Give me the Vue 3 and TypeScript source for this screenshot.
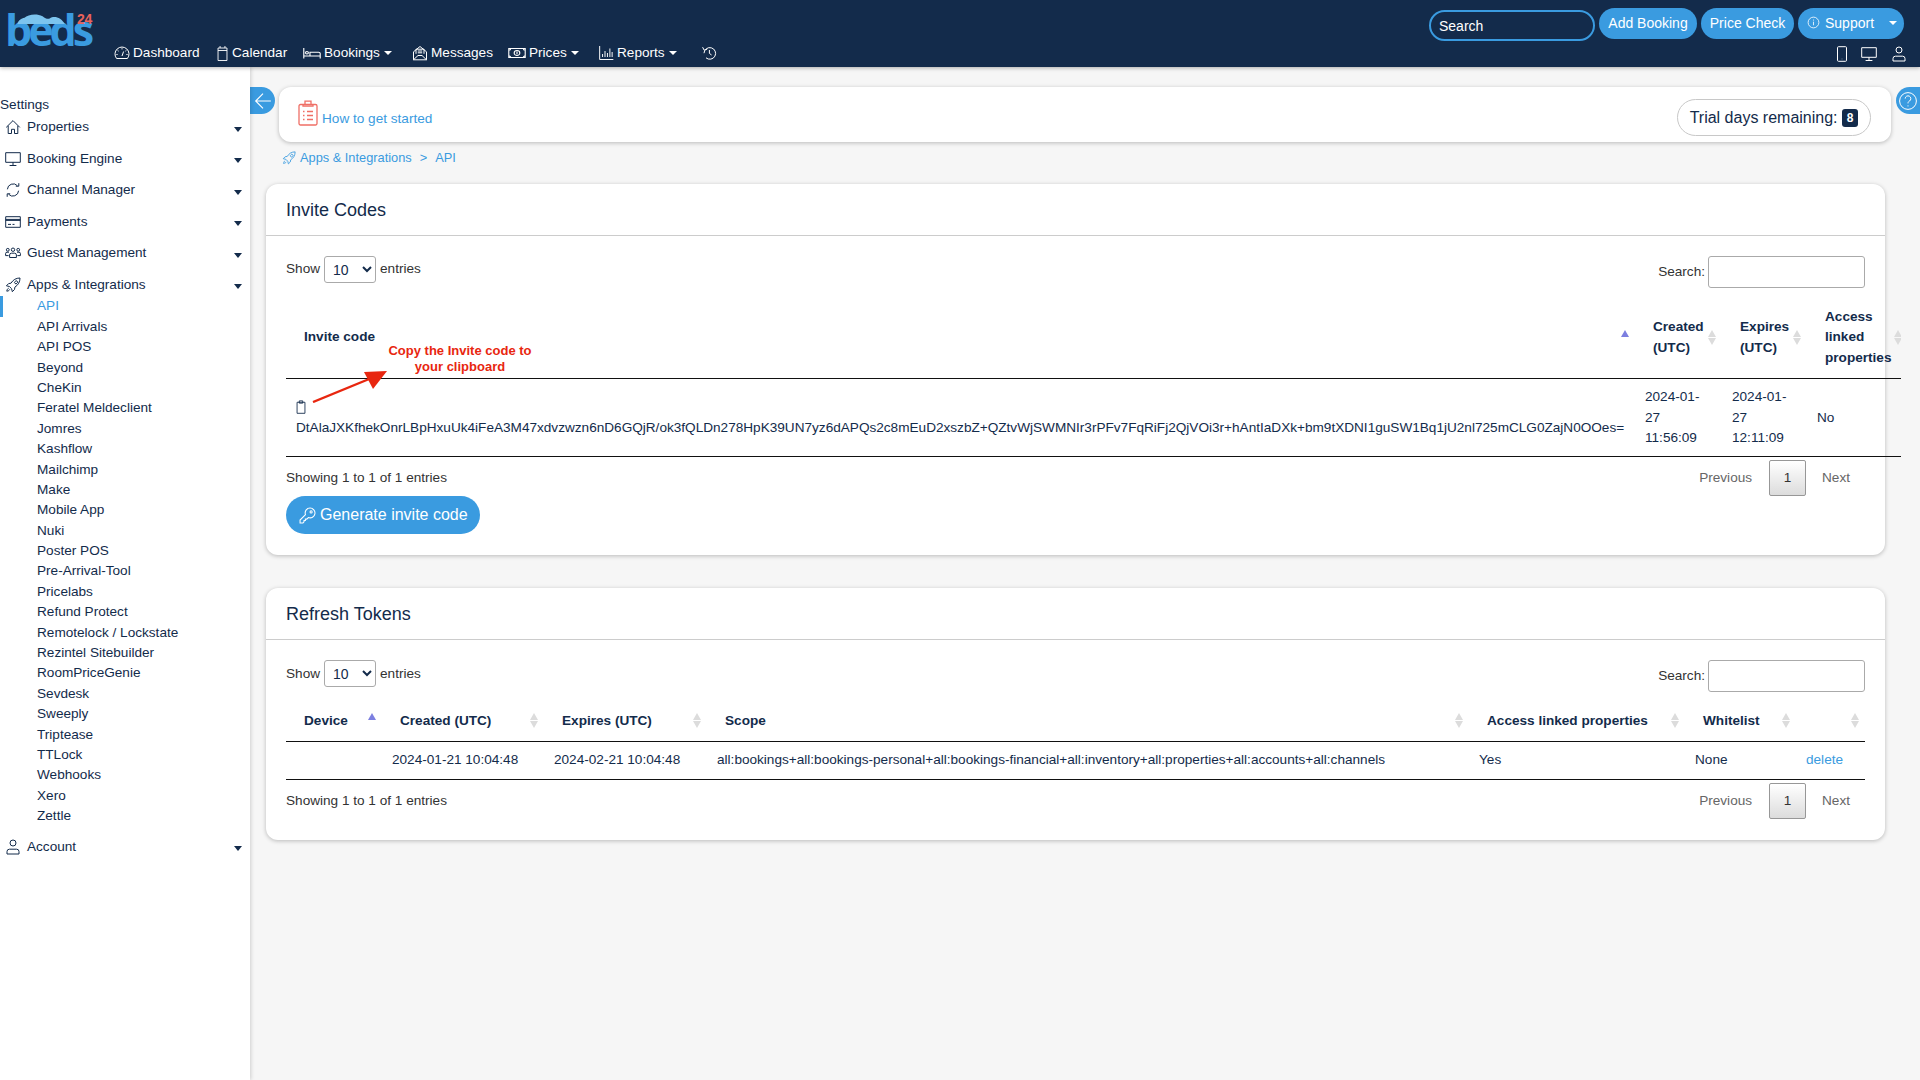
<script setup lang="ts">
const subItems: string[] = ['API','API Arrivals','API POS','Beyond','CheKin','Feratel Meldeclient','Jomres','Kashflow','Mailchimp','Make','Mobile App','Nuki','Poster POS','Pre-Arrival-Tool','Pricelabs','Refund Protect','Remotelock / Lockstate','Rezintel Sitebuilder','RoomPriceGenie','Sevdesk','Sweeply','Triptease','TTLock','Webhooks','Xero','Zettle']
const icons: Record<string,string> = {
  gauge: 'M2.6 13.5a7 7 0 1 1 10.8 0zM8 11l1.6-4.5M8 3.2v1.2M3.6 5.4l1 .7M12.4 5.4l-1 .7M2.4 9.5h1.2M12.4 9.5h1.2',
  calendar: 'M2.5 3h11v12.5h-11zM2.5 5.5h11M5 1v2M11 1v2',
  bed: 'M.7 3v10.5M.7 11h14.6M15.3 13.5V8.6a1.4 1.4 0 0 0-1.4-1.4H6.2V11M2.2 7.8a1.3 1.3 0 1 0 2.6 0a1.3 1.3 0 1 0-2.6 0',
  mail: 'M1.5 6.8v8h13v-8M1.5 6.8L8 1.5l6.5 5.3M1.5 14.8L6 10.5h4l4.5 4.3M4 8.8V4.2h8v4.6M5.8 6h4.4M5.8 7.8h4.4',
  money: 'M.7 3.5h14.6v9H.7zM8 5.5a2.5 2.5 0 1 0 0 5a2.5 2.5 0 1 0 0-5M2.4 3.5a1.7 1.7 0 0 1-1.7 1.7M13.6 3.5a1.7 1.7 0 0 0 1.7 1.7M2.4 12.5a1.7 1.7 0 0 0-1.7-1.7M13.6 12.5a1.7 1.7 0 0 1 1.7-1.7M8 6.5v3',
  chart: 'M.7 1v13.5h14.6M3.8 12V9M6.4 12V6M9 12V8M11.6 12V3.5M14 12V7',
  history: 'M3 8.2a5.8 5.8 0 1 1 2 4.6M1.6 2.2l1.6 3 3-1M8.4 5v3.4l2.2 1.6',
  phone: 'M4.5.7h7a1 1 0 0 1 1 1v12.6a1 1 0 0 1-1 1h-7a1 1 0 0 1-1-1V1.7a1 1 0 0 1 1-1zM8 12.8v.4',
  monitor: 'M.7 1.7h14.6v9.6H.7zM8 11.3v3M4.6 14.5h6.8',
  person: 'M8 1a3 3 0 1 0 0 6a3 3 0 1 0 0-6M2 15v-2.4a2.4 2.4 0 0 1 2.4-2.4h7.2a2.4 2.4 0 0 1 2.4 2.4V15z',
  home: 'M1.2 8.4L8 1.6l6.8 6.8M3.2 6.8v7.7h3.3v-4.2h3v4.2h3.3V6.8',
  sync: 'M2.4 7.3a5.8 5.8 0 0 1 10-3.6M13.8 1.2v3h-3M13.6 8.7a5.8 5.8 0 0 1-10 3.6M2.2 14.8v-3h3',
  card: 'M.7 2.7h14.6v10.6H.7zM.7 5.4h14.6M.7 6.4h14.6M3 10.4h3M7.5 10.4h2',
  people: 'M8 3a1.7 1.7 0 1 0 0 3.4A1.7 1.7 0 1 0 8 3M2.8 3.4a1.4 1.4 0 1 0 0 2.8a1.4 1.4 0 1 0 0-2.8M13.2 3.4a1.4 1.4 0 1 0 0 2.8a1.4 1.4 0 1 0 0-2.8M4.6 12.5V10a1.8 1.8 0 0 1 1.8-1.8h3.2a1.8 1.8 0 0 1 1.8 1.8v2.5zM3.6 10.6H.6V8.6a1.4 1.4 0 0 1 1.4-1.4h2M12.4 10.6h3V8.6A1.4 1.4 0 0 0 14 7.2h-2',
  rocket: 'M15 1c-4 0-7 1.8-9 5.2L3.6 6.6 1.4 8.8l3 .7 2.2 2.2.7 3 2.2-2.2.4-2.4C13.2 8 15 5 15 1zM10.2 4.4a1.3 1.3 0 1 0 1.8 1.8a1.3 1.3 0 1 0-1.8-1.8M3.6 11.2c-1 .4-1.6 1.4-1.8 3 1.6-.2 2.6-.8 3-1.8',
  key: 'M10.4 1a4.6 4.6 0 0 0-4.3 6.2L1 12.3V15h2.7l1-1v-1.3H6V11.4h1.3l1.5-1.5A4.6 4.6 0 1 0 10.4 1zM11.4 3.6a1 1 0 1 0 0 2a1 1 0 1 0 0-2',
  clip: 'M3.5 2.6h9v12.6h-9zM6 1h4v2.6H6z'
}
const navLinks = [
  { i: 'gauge', t: 'Dashboard', w: 102, iw: 16, c: false },
  { i: 'calendar', t: 'Calendar', w: 87, iw: 13, c: false },
  { i: 'bed', t: 'Bookings', w: 109, iw: 18, c: true },
  { i: 'mail', t: 'Messages', w: 96, iw: 16, c: false },
  { i: 'money', t: 'Prices', w: 91, iw: 18, c: true },
  { i: 'chart', t: 'Reports', w: 102, iw: 15, c: true }
]
const groups = [
  { i: 'home', t: 'Properties' },
  { i: 'monitor', t: 'Booking Engine' },
  { i: 'sync', t: 'Channel Manager' },
  { i: 'card', t: 'Payments' },
  { i: 'people', t: 'Guest Management' },
  { i: 'rocket', t: 'Apps & Integrations' }
]
const inviteCode = 'DtAlaJXKfhekOnrLBpHxuUk4iFeA3M47xdvzwzn6nD6GQjR/ok3fQLDn278HpK39UN7yz6dAPQs2c8mEuD2xszbZ+QZtvWjSWMNIr3rPFv7FqRiFj2QjVOi3r+hAntIaDXk+bm9tXDNI1guSW1Bq1jU2nl725mCLG0ZajN0OOes='
const scope = 'all:bookings+all:bookings-personal+all:bookings-financial+all:inventory+all:properties+all:accounts+all:channels'
const tokenCols = [
  { t: 'Device', w: 96, asc: true },
  { t: 'Created (UTC)', w: 162, asc: false },
  { t: 'Expires (UTC)', w: 163, asc: false },
  { t: 'Scope', w: 762, asc: false },
  { t: 'Access linked properties', w: 216, asc: false },
  { t: 'Whitelist', w: 111, asc: false },
  { t: '', w: 69, asc: false }
]
</script>

<template>
  <div class="page">
    <header class="nav">
      <div class="brand">
        <span class="beds">beds</span>
        <svg class="cloud" viewBox="0 0 60 14"><path d="M0 14C1 9 5 7 9 6C13 2 24 0 32 4C36 7 38 8 41 7C47 3 56 6 60 14z"/></svg>
        <span class="b24">24</span>
      </div>
      <nav class="links">
        <a v-for="l in navLinks" :key="l.t" class="link" :style="{ width: l.w + 'px' }">
          <svg class="ni" :style="{ width: l.iw + 'px' }" viewBox="0 0 16 16" preserveAspectRatio="none"><path :d="icons[l.i]"/></svg>
          <span>{{ l.t }}</span>
          <i v-if="l.c" class="caret white"></i>
        </a>
        <svg class="ni hist" viewBox="0 0 16 16"><path :d="icons.history"/></svg>
      </nav>
      <div class="right">
        <div class="tools">
          <div class="search">Search</div>
          <button class="pill">Add Booking</button>
          <button class="pill">Price Check</button>
          <button class="pill support">
            <svg class="info" viewBox="0 0 16 16"><circle cx="8" cy="8" r="6.6"/><path d="M8 7v4.4M8 4.4v1.2"/></svg>
            <span>Support</span>
            <i class="caret white small"></i>
          </button>
        </div>
        <div class="devices">
          <svg class="ni phone" viewBox="0 0 16 16"><path :d="icons.phone"/></svg>
          <svg class="ni" viewBox="0 0 16 16"><path :d="icons.monitor"/></svg>
          <svg class="ni" viewBox="0 0 16 16"><path :d="icons.person"/></svg>
        </div>
      </div>
    </header>

    <div class="shell">
      <aside class="side">
        <div class="settings">Settings</div>
        <div v-for="g in groups" :key="g.t" class="group">
          <svg class="gi" viewBox="0 0 16 16"><path :d="icons[g.i]"/></svg>
          <span>{{ g.t }}</span>
          <i class="caret navy"></i>
        </div>
        <ul class="subs">
          <li v-for="(s, n) in subItems" :key="s" :class="{ on: n === 0 }">{{ s }}</li>
        </ul>
        <div class="group account">
          <svg class="gi" viewBox="0 0 16 16"><path :d="icons.person"/></svg>
          <span>Account</span>
          <i class="caret navy"></i>
        </div>
      </aside>

      <main class="main">
        <button class="back" aria-label="Back">
          <svg viewBox="0 0 16 16"><path d="M15 8H1.5M8 1.5L1.5 8L8 14.5"/></svg>
        </button>
        <button class="help" aria-label="Help">
          <svg viewBox="0 0 20 20"><circle cx="10" cy="10" r="8.4"/><path d="M7.2 7.6a2.8 2.8 0 1 1 4.3 2.4c-1 .6-1.5 1.1-1.5 2.4M10 14.4v1"/></svg>
        </button>

        <section class="top">
          <svg class="todo" viewBox="0 0 20 26"><path d="M2.5 4.5h15a1.5 1.5 0 0 1 1.5 1.5v17.5a1.5 1.5 0 0 1-1.5 1.5h-15A1.5 1.5 0 0 1 1 23.5V6a1.5 1.5 0 0 1 1.5-1.5zM7 4.5V1.2h6v3.3M5 4.5v1.6h10V4.5M5 11.5h1.5M9 11.5h6M5 15.5h1.5M9 15.5h6M5 19.5h1.5M9 19.5h6"/></svg>
          <a class="start">How to get started</a>
          <div class="trial">Trial days remaining: <b>8</b></div>
        </section>

        <div class="crumb">
          <svg viewBox="0 0 16 16"><path :d="icons.rocket"/></svg>
          <span>Apps &amp; Integrations</span><span class="gt">&gt;</span><span>API</span>
        </div>

        <section class="card">
          <h2>Invite Codes</h2>
          <div class="body">
            <div class="controls">
              <label class="show">Show <select><option>10</option></select> entries</label>
              <label class="find">Search: <input type="text" /></label>
            </div>
            <div class="wrap invite">
              <table>
                <colgroup><col style="width:1349px"/><col style="width:87px"/><col style="width:85px"/><col style="width:94px"/></colgroup>
                <thead>
                  <tr>
                    <th>Invite code<svg class="sort" viewBox="0 0 8 15"><path class="asc" d="M4 0l4 7H0z"/></svg></th>
                    <th>Created (UTC)<svg class="sort" viewBox="0 0 8 15"><path d="M4 0l4 7H0zM4 15l4-7H0z"/></svg></th>
                    <th>Expires (UTC)<svg class="sort" viewBox="0 0 8 15"><path d="M4 0l4 7H0zM4 15l4-7H0z"/></svg></th>
                    <th>Access linked properties<svg class="sort last" viewBox="0 0 8 15"><path d="M4 0l4 7H0zM4 15l4-7H0z"/></svg></th>
                  </tr>
                </thead>
                <tbody>
                  <tr>
                    <td class="code">
                      <svg class="clip" viewBox="0 0 16 16"><path :d="icons.clip"/></svg>
                      <div>{{ inviteCode }}</div>
                    </td>
                    <td>2024-01-27 11:56:09</td>
                    <td>2024-01-27 12:11:09</td>
                    <td>No</td>
                  </tr>
                </tbody>
              </table>
              <div class="note">Copy the Invite code to<br/>your clipboard</div>
              <svg class="arrow" viewBox="0 0 80 34"><path d="M1 33L62 8"/><path d="M75 2L52 3L61 20z"/></svg>
            </div>
            <div class="foot">
              <span class="info-text">Showing 1 to 1 of 1 entries</span>
              <div class="pages"><span class="prev">Previous</span><b>1</b><span>Next</span></div>
            </div>
            <button class="gen">
              <svg viewBox="0 0 16 16"><path :d="icons.key"/></svg>
              Generate invite code
            </button>
          </div>
        </section>

        <section class="card second">
          <h2>Refresh Tokens</h2>
          <div class="body">
            <div class="controls">
              <label class="show">Show <select><option>10</option></select> entries</label>
              <label class="find">Search: <input type="text" /></label>
            </div>
            <div class="wrap tokens">
              <table>
                <colgroup><col v-for="c in tokenCols" :key="c.t" :style="{ width: c.w + 'px' }"/></colgroup>
                <thead>
                  <tr>
                    <th v-for="c in tokenCols" :key="c.t">{{ c.t }}
                      <svg class="sort" viewBox="0 0 8 15">
                        <path v-if="c.asc" class="asc" d="M4 0l4 7H0z"/>
                        <path v-else d="M4 0l4 7H0zM4 15l4-7H0z"/>
                      </svg>
                    </th>
                  </tr>
                </thead>
                <tbody>
                  <tr>
                    <td></td>
                    <td>2024-01-21 10:04:48</td>
                    <td>2024-02-21 10:04:48</td>
                    <td>{{ scope }}</td>
                    <td>Yes</td>
                    <td>None</td>
                    <td><a class="del">delete</a></td>
                  </tr>
                </tbody>
              </table>
            </div>
            <div class="foot">
              <span class="info-text">Showing 1 to 1 of 1 entries</span>
              <div class="pages"><span class="prev">Previous</span><b>1</b><span>Next</span></div>
            </div>
          </div>
        </section>
      </main>
    </div>
  </div>
</template>

<style scoped>
.page { width: 1920px; height: 1080px; overflow: hidden; display: flex; flex-direction: column; font: 13.6px/20.4px "Liberation Sans", Arial, sans-serif; color: #132b4b; background: #f6f6f6; }
svg path, svg circle { fill: none; stroke: currentColor; stroke-width: 1; }

/* top bar */
.nav { height: 67px; flex: none; background: #132b4b; color: #fff; display: flex; position: relative; z-index: 3; box-shadow: 0 1px 4px rgba(0,0,0,.3); }
.brand { position: relative; width: 114px; flex: none; }
.beds { position: absolute; left: 5px; top: 6px; font: 700 43px/48px "Open Sans", sans-serif; letter-spacing: -4px; color: #3a9be0; }
.cloud { position: absolute; left: 17px; top: 13px; width: 48px; height: 11px; }
.cloud path { fill: #7cc4ee; stroke-width: 0; }
.b24 { position: absolute; left: 77px; top: 11px; font: 700 14px/16px "Liberation Sans", sans-serif; letter-spacing: -.4px; color: #e9635c; }
.links { display: flex; align-items: center; align-self: flex-end; height: 30px; box-sizing: border-box; padding-top: 2px; }
.link { display: flex; align-items: center; gap: 3px; white-space: nowrap; }
.ni { width: 16px; height: 16px; flex: none; }
.caret { display: inline-block; width: 0; height: 0; border-left: 4.5px solid transparent; border-right: 4.5px solid transparent; }
.caret.white { border-top: 4.5px solid #fff; margin-left: 1px; }
.right { margin-left: auto; width: 491px; flex: none; display: flex; flex-direction: column; }
.tools { display: flex; align-items: flex-start; gap: 4px; padding-top: 8px; }
.search { width: 166px; height: 31px; flex: none; box-sizing: border-box; margin-top: 2px; border: 2px solid #3a9be0; border-radius: 16px; padding: 0 8px; font-size: 14px; line-height: 28px; color: #fff; }
.pill { height: 31px; border: 0; border-radius: 16px; background: #3a9be0; color: #fff; font: 14px "Liberation Sans", sans-serif; padding: 0 0 2px; flex: none; }
.pill:nth-child(2) { width: 98px; }
.pill:nth-child(3) { width: 93px; }
.pill.support { width: 106px; display: flex; align-items: center; padding: 0 0 2px 9px; }
.info { width: 13px; height: 13px; margin-right: 5px; flex: none; }
.caret.small { margin-left: 15px; }
.devices { display: flex; justify-content: flex-end; gap: 14px; padding: 5px 13px 0 0; }
.phone { margin-right: -3px; }

/* sidebar */
.shell { flex: 1; display: flex; min-height: 0; }
.side { width: 250px; flex: none; background: #fff; box-shadow: 1px 0 4px rgba(0,0,0,.16); padding-top: 29px; position: relative; z-index: 2; }
.settings { height: 15.6px; line-height: 18px; }
.group { height: 31.5px; display: flex; align-items: center; padding-left: 5px; position: relative; }
.group span { margin-left: 6px; }
.gi { width: 16px; height: 16px; flex: none; }
.caret.navy { position: absolute; left: 234px; top: 15px; border-top: 5px solid #132b4b; }
.subs { list-style: none; margin: -4.2px 0 0; padding: 0; }
.subs li { height: 20.4px; line-height: 20.4px; padding-left: 37px; position: relative; }
.subs li.on { color: #3a9be0; }
.subs li.on::before { content: ""; position: absolute; left: 0; top: 0; width: 3px; height: 21px; background: #3a9be0; }
.account { margin-top: 4.4px; }

/* main */
.main { flex: 1; min-width: 0; padding: 20px 0 0 16px; position: relative; }
.back { position: absolute; left: 0; top: 20px; width: 25px; height: 27px; border: 0; padding: 0; background: #3a9be0; color: #fff; border-radius: 0 14px 14px 0; display: flex; align-items: center; justify-content: center; }
.back svg { width: 18px; height: 18px; }
.help { position: absolute; right: 0; top: 20px; width: 24px; height: 27px; border: 0; padding: 0 0 0 2px; background: #3a9be0; color: #fff; border-radius: 14px 0 0 14px; display: flex; align-items: center; }
.help svg { width: 20px; height: 20px; }
.top { margin: 0 29px 0 13px; height: 55px; background: #fff; border-radius: 12px; box-shadow: 0 1px 4px rgba(0,0,0,.25); display: flex; align-items: center; padding: 0 20px 0 19px; box-sizing: border-box; }
.todo { width: 20px; height: 26px; color: #ef6f66; flex: none; margin-bottom: 3px; }
.todo path { stroke-width: 1.3; }
.start { margin: 9px 0 0 4px; color: #3a9be0; }
.trial { margin: 6px 0 0 auto; height: 37px; box-sizing: border-box; border: 1px solid #c8c8c8; border-radius: 19px; padding: 0 12px; font-size: 16px; line-height: 35px; display: flex; align-items: center; white-space: pre; }
.trial b { width: 16px; height: 18px; background: #132b4b; color: #fff; border-radius: 3px; font-size: 12px; line-height: 18px; text-align: center; }
.crumb { height: 42px; margin-left: 16px; display: flex; align-items: flex-start; padding-top: 6px; box-sizing: border-box; color: #3a9be0; font-size: 12.8px; }
.crumb svg { width: 14px; height: 14px; margin: 3px 4px 0 0; flex: none; }
.gt { margin: 0 8px; }

.card { width: 1619px; box-sizing: border-box; background: #fff; border-radius: 12px; box-shadow: 0 1px 4px rgba(0,0,0,.25); }
.second { margin-top: 33px; }
h2 { margin: 0; height: 51px; border-bottom: 1px solid #ccc; padding-left: 20px; font: 400 18px/53px "Liberation Sans", sans-serif; color: #132b4b; }
.body { padding: 20px 20px 21px; }
.controls { display: flex; justify-content: space-between; align-items: flex-start; color: #333; }
.show { display: flex; align-items: center; height: 27px; gap: 4px; }
select { width: 52px; height: 27px; box-sizing: border-box; border: 1px solid #aaa; border-radius: 3px; background: #fff; font: 14px "Liberation Sans", sans-serif; color: #132b4b; padding-left: 4px; }
.find { display: flex; align-items: center; gap: 3px; height: 32px; }
input { width: 157px; height: 32px; box-sizing: border-box; border: 1px solid #aaa; border-radius: 3px; background: #fff; }
.wrap { position: relative; overflow: hidden; margin-top: 9px; }
.invite { width: 1615px; }
.tokens { width: 1579px; }
table { border-collapse: separate; border-spacing: 0; table-layout: fixed; width: 100%; }
th { position: relative; text-align: left; font-weight: 700; padding: 10px 18px; border-bottom: 1px solid #111; color: #132b4b; vertical-align: middle; }
td { padding: 8px 10px; border-bottom: 1px solid #111; vertical-align: middle; color: #132b4b; }
.invite th { height: 61px; }
.invite th:nth-child(n+2) { padding-right: 4px; }
.invite th:nth-child(4) { padding-right: 0; }
.invite td.code { white-space: nowrap; }
.clip { display: block; width: 14px; height: 14px; margin: 2px 0 4px -2px; }
.tokens th { padding-top: 10px; padding-bottom: 9px; white-space: nowrap; }
.tokens td { padding-top: 8.5px; padding-bottom: 8.5px; white-space: nowrap; }
.sort { position: absolute; right: 6px; top: 50%; margin-top: -8px; width: 8px; height: 15px; }
.sort path { fill: #dcdcdc; stroke-width: 0; }
.sort path.asc { fill: #7c7fe0; }
.sort.last { right: -1px; }
.note { position: absolute; left: 74px; top: 46px; width: 200px; text-align: center; color: #e8260f; font: 700 13px/16px "Liberation Sans", sans-serif; }
.arrow { position: absolute; left: 26px; top: 72px; width: 80px; height: 34px; }
.arrow path:first-child { stroke: #e8260f; stroke-width: 2.4; }
.arrow path:last-child { fill: #e8260f; stroke-width: 0; }
.foot { display: flex; justify-content: space-between; align-items: center; height: 36px; margin-top: 3px; color: #333; }
.pages { display: flex; align-items: center; gap: 16px; padding-right: 15px; color: #666; }
.prev { margin-right: 1px; }
.pages b { width: 37px; height: 36px; box-sizing: border-box; border: 1px solid #979797; border-radius: 2px; background: linear-gradient(#fff, #dcdcdc); color: #333; font-weight: 400; text-align: center; line-height: 34px; }
.gen { display: flex; align-items: center; gap: 4px; width: 194px; height: 38px; border: 0; border-radius: 19px; background: #3a9be0; color: #fff; font: 16px "Liberation Sans", sans-serif; padding: 0 0 0 13px; }
.gen svg { width: 17px; height: 17px; }
.del { color: #3a9be0; }
</style>

<style>
html, body { margin: 0; padding: 0; background: #f6f6f6; }
</style>
